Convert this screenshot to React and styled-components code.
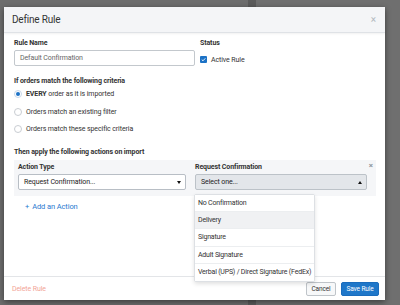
import React from 'react'
import styled, { createGlobalStyle } from 'styled-components'

const GlobalStyle = createGlobalStyle`
  html, body { margin: 0; padding: 0; }
  body {
    width: 400px;
    height: 305px;
    overflow: hidden;
    background: #6d6d6d;
    font-family: Roboto, "Liberation Sans", sans-serif;
  }
`

const Backdrop = styled.div`
  width: 400px;
  height: 305px;
  box-sizing: border-box;
  padding: 7px 0 0 4px;
  background: linear-gradient(to right, #6d6d6d 248px, #5b5b5b 248px, #5b5b5b 256px, #6f6f6f 256px);
`

const Modal = styled.div`
  position: relative;
  width: 381px;
  height: 293px;
  display: flex;
  flex-direction: column;
  background: #fff;
  box-shadow: 0 2px 6px rgba(0, 0, 0, 0.45);
`

const Header = styled.div`
  height: 25px;
  flex-shrink: 0;
  display: flex;
  align-items: center;
  justify-content: space-between;
  padding: 0 9px 0 8px;
  background: #f4f5f7;
  border-bottom: 1px solid #dfe2e6;
  box-shadow: 0 1px 2px rgba(0, 0, 0, 0.06);
`

const Title = styled.div`
  font-size: 10px;
  letter-spacing: -0.2px;
  color: #333;
`

const Close = styled.span`
  font-size: 10px;
  line-height: 10px;
  color: #b3b9c0;
`

const Body = styled.div`
  flex: 1;
  padding: 6px 9px 0 10px;
`

const TopRow = styled.div`
  display: grid;
  grid-template-columns: 181px 1fr;
  gap: 5px;
`

const Label = styled.div`
  font-size: 7px;
  line-height: 9px;
  font-weight: 700;
  letter-spacing: -0.1px;
  color: #333;
  margin-top: ${p => p.$top || 0}px;
  margin-bottom: ${p => p.$bottom || 0}px;
`

const TextInput = styled.div`
  height: 16px;
  box-sizing: border-box;
  display: flex;
  align-items: center;
  padding-left: 5px;
  border: 1px solid #c3c8cd;
  border-radius: 2px;
  font-size: 7px;
  letter-spacing: -0.1px;
  color: #666;
`

const CheckRow = styled.div`
  margin-top: 7px;
  height: 9px;
  display: flex;
  align-items: center;
  gap: 4px;
  font-size: 7px;
  letter-spacing: -0.1px;
  color: #333;
`

const CheckBox = styled.span`
  width: 7px;
  height: 7px;
  border-radius: 1px;
  background: #1c72c6;
  display: flex;
  align-items: center;
  justify-content: center;
`

const RadioRow = styled.div`
  height: 17.5px;
  display: flex;
  align-items: center;
  gap: 4px;
  font-size: 7px;
  letter-spacing: -0.1px;
  color: #333;
  b { font-weight: 700; }
`

const Radio = styled.span`
  width: 8px;
  height: 8px;
  box-sizing: border-box;
  border-radius: 50%;
  border: 1px solid ${p => (p.$on ? '#c7d7ea' : '#c9cdd2')};
  display: flex;
  align-items: center;
  justify-content: center;
  &::after {
    content: '';
    width: 4px;
    height: 4px;
    border-radius: 50%;
    background: ${p => (p.$on ? '#1c72c6' : 'transparent')};
  }
`

const ActionBox = styled.div`
  position: relative;
  margin-top: 3.5px;
  padding: 2.5px 9px 6px 4px;
  background: #f5f6f8;
  display: grid;
  grid-template-columns: 168px 172px;
  gap: 9px;
`

const RemoveX = styled.span`
  position: absolute;
  right: 3px;
  top: 1px;
  font-size: 8px;
  font-weight: 700;
  color: #8e959c;
`

const SelectWrap = styled.div`
  position: relative;
`

const Select = styled.div`
  height: 16px;
  box-sizing: border-box;
  display: flex;
  align-items: center;
  justify-content: space-between;
  padding: 0 4px 0 5px;
  border: 1px solid ${p => (p.$open ? '#bcc2c8' : '#b8bec5')};
  border-radius: 2px;
  background: ${p => (p.$open ? '#e3e6ea' : '#fff')};
  font-size: 7px;
  letter-spacing: -0.1px;
  color: #222;
`

const Caret = styled.span`
  width: 0;
  height: 0;
  border-left: 2.5px solid transparent;
  border-right: 2.5px solid transparent;
  ${p => (p.$up ? 'border-bottom: 3px solid #111;' : 'border-top: 3px solid #111;')}
`

const Menu = styled.div`
  position: absolute;
  z-index: 2;
  left: -1px;
  top: 20px;
  width: 121px;
  box-sizing: border-box;
  background: #fff;
  border: 1px solid #dde0e4;
  border-radius: 2px;
  box-shadow: 0 2px 4px rgba(0, 0, 0, 0.12);
`

const MenuItem = styled.div`
  height: 17.2px;
  display: flex;
  align-items: center;
  padding-left: 3px;
  font-size: 7px;
  letter-spacing: -0.2px;
  color: #333;
  white-space: nowrap;
  background: ${p => (p.$hover ? '#f0f1f3' : '#fff')};
  border-bottom: 1px solid #eceef0;
  box-sizing: border-box;
  &:last-child { border-bottom: none; }
`

const AddAction = styled.div`
  margin-top: 5.5px;
  padding-left: 11px;
  height: 9px;
  display: flex;
  align-items: center;
  gap: 3px;
  font-size: 7.5px;
  letter-spacing: -0.1px;
  color: #2a7ad0;
`

const Footer = styled.div`
  height: 24px;
  flex-shrink: 0;
  box-sizing: border-box;
  border-top: 1px solid #e3e5e8;
  display: flex;
  align-items: center;
  justify-content: space-between;
  padding: 0 6px 0 8px;
`

const DeleteLink = styled.span`
  font-size: 7px;
  letter-spacing: -0.1px;
  color: #f2a497;
`

const Buttons = styled.div`
  display: flex;
  gap: 5px;
`

const Button = styled.div`
  height: 14px;
  width: ${p => p.$w}px;
  box-sizing: border-box;
  display: flex;
  align-items: center;
  justify-content: center;
  border-radius: 2px;
  font-size: 6.5px;
  letter-spacing: -0.1px;
  border: 1px solid ${p => (p.$primary ? '#1a6cbd' : '#bfc4c9')};
  background: ${p => (p.$primary ? '#1f77c9' : '#f7f8f9')};
  color: ${p => (p.$primary ? '#fff' : '#333')};
`

const options = [
  'No Confirmation',
  'Delivery',
  'Signature',
  'Adult Signature',
  'Verbal (UPS) / Direct Signature (FedEx)',
]

export default function App() {
  return (
    <>
      <GlobalStyle />
      <Backdrop>
        <Modal>
          <Header>
            <Title>Define Rule</Title>
            <Close>×</Close>
          </Header>
          <Body>
            <TopRow>
              <div>
                <Label $bottom={2}>Rule Name</Label>
                <TextInput>Default Confirmation</TextInput>
              </div>
              <div>
                <Label>Status</Label>
                <CheckRow>
                  <CheckBox>
                    <svg width="5" height="5" viewBox="0 0 10 10">
                      <path d="M1.5 5.2 L4 7.6 L8.6 2.6" fill="none" stroke="#fff" strokeWidth="1.8" />
                    </svg>
                  </CheckBox>
                  Active Rule
                </CheckRow>
              </div>
            </TopRow>

            <Label $top={10.5}>If orders match the following criteria</Label>
            <RadioRow>
              <Radio $on />
              <span><b>EVERY</b> order as it is imported</span>
            </RadioRow>
            <RadioRow>
              <Radio />
              Orders match an existing filter
            </RadioRow>
            <RadioRow>
              <Radio />
              Orders match these specific criteria
            </RadioRow>

            <Label $top={9.5}>Then apply the following actions on import</Label>
            <ActionBox>
              <div>
                <Label $bottom={2.5}>Action Type</Label>
                <Select>
                  Request Confirmation...
                  <Caret />
                </Select>
              </div>
              <div>
                <Label $bottom={2.5}>Request Confirmation</Label>
                <SelectWrap>
                  <Select $open>
                    Select one...
                    <Caret $up />
                  </Select>
                  <Menu>
                    {options.map(o => (
                      <MenuItem key={o} $hover={o === 'Delivery'}>{o}</MenuItem>
                    ))}
                  </Menu>
                </SelectWrap>
              </div>
              <RemoveX>×</RemoveX>
            </ActionBox>
            <AddAction>
              <span>+</span>
              Add an Action
            </AddAction>
          </Body>
          <Footer>
            <DeleteLink>Delete Rule</DeleteLink>
            <Buttons>
              <Button $w={30}>Cancel</Button>
              <Button $w={38} $primary>Save Rule</Button>
            </Buttons>
          </Footer>
        </Modal>
      </Backdrop>
    </>
  )
}
